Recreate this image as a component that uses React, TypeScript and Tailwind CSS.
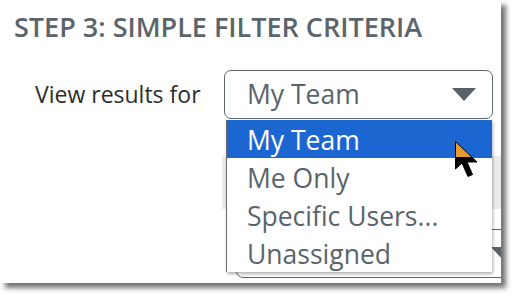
import React from "react";

const options = ["My Team", "Me Only", "Specific Users...", "Unassigned"];

function Caret({ className }: { className?: string }) {
  return (
    <svg width="24" height="13" viewBox="0 0 24 13" className={className}>
      <path d="M0 0 H24 L12 13 Z" fill="#56616a" />
    </svg>
  );
}

// inverted (XOR) arrow cursor: orange over the blue row, black over white
function Cursor() {
  return (
    <svg width="26" height="38" viewBox="0 0 26 38" className="absolute left-[228px] top-[21px]">
      <defs>
        <linearGradient id="inv" x1="0" y1="0" x2="0" y2="38" gradientUnits="userSpaceOnUse">
          <stop offset="0.42" stopColor="#e89a2f" />
          <stop offset="0.42" stopColor="#000" />
        </linearGradient>
      </defs>
      <path
        d="M0.5 0.5 L0.5 28 L7 22 L13 35.5 L17.5 33.5 L12 21 L22 21 Z"
        fill="url(#inv)"
        stroke="#000"
        strokeWidth="1"
        strokeLinejoin="miter"
      />
    </svg>
  );
}

export default function App() {
  return (
    <div className="w-[517px] h-[299px] bg-white font-['Open_Sans',sans-serif]">
      <div className="relative w-[501px] h-[283px] bg-white overflow-hidden shadow-[5px_5px_5px_rgba(0,0,0,0.55)]">
        <h2 className="pl-[14px] pt-[9px] text-[27px] leading-[36px] font-semibold text-[#5a646c]">
          STEP 3: SIMPLE FILTER CRITERIA
        </h2>

        <div className="flex items-center mt-[25px]">
          <span className="w-[224px] pl-[35px] text-[23px] text-[#2c2c2c]">View results for</span>
          <div className="relative w-[269px] h-[49px] border border-[#5c6770] rounded-[7px] flex items-center justify-between pl-[22px] pr-[16px]">
            <span className="text-[26.5px] text-[#5a646c] pt-[1px]">My Team</span>
            <Caret />

            {/* open option list */}
            <ul className="absolute z-10 left-[1px] top-[49px] w-[266px] bg-white border-l border-[#6a6a6a] shadow-[1px_2px_3px_rgba(0,0,0,0.3)]">
              {options.map((o, i) => (
                <li
                  key={o}
                  className={`h-[38px] pl-[20px] pt-[3px] flex items-center text-[26.5px] ${
                    i === 0 ? "bg-[#1b66d1] text-white" : "text-[#5a646c]"
                  }`}
                >
                  {o}
                </li>
              ))}
              <Cursor />
            </ul>
          </div>
        </div>

        {/* content hidden behind the open list */}
        <div className="ml-[222px] mt-[37px] h-[53px] bg-[#ebebeb]" />
        <div className="ml-[236px] mt-[20px] w-[297px] h-[49px] border border-[#5c6770] rounded-[7px] flex items-center justify-end pr-[17px]">
          <Caret />
        </div>
      </div>
    </div>
  );
}
